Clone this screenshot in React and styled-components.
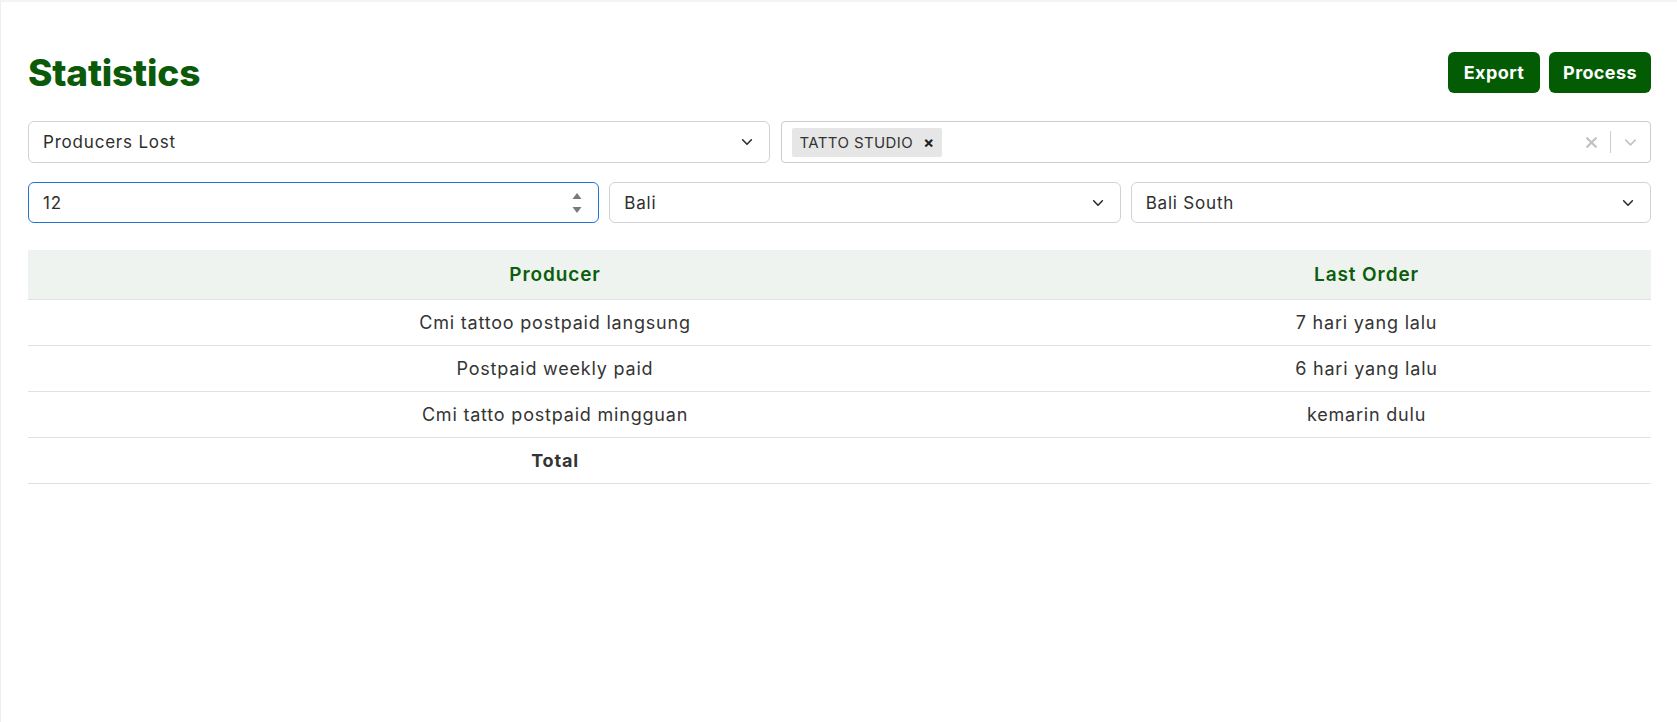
import React from "react";
import styled, { createGlobalStyle } from "styled-components";

const GlobalStyle = createGlobalStyle`
  body {
    margin: 0;
    background: #ffffff;
    font-family: "Inter", "Noto Sans", sans-serif;
    color: #343434;
  }
`;

const rows = [
  { producer: "Cmi tattoo postpaid langsung", last: "7 hari yang lalu" },
  { producer: "Postpaid weekly paid", last: "6 hari yang lalu" },
  { producer: "Cmi tatto postpaid mingguan", last: "kemarin dulu" },
];

const Chevron = ({ color = "#2b2b2b", size = 14 }) => (
  <svg width={size} height={size} viewBox="0 0 16 16" fill="none">
    <path
      d="M3 5.5l5 5 5-5"
      stroke={color}
      strokeWidth="1.8"
      strokeLinecap="round"
      strokeLinejoin="round"
    />
  </svg>
);

const App = () => {
  return (
    <Page>
      <GlobalStyle />
      <Container>
        <HeaderRow>
          <Title>Statistics</Title>
          <Actions>
            <ActionButton $w={92}>Export</ActionButton>
            <ActionButton $w={102}>Process</ActionButton>
          </Actions>
        </HeaderRow>

        <FilterRow $cols="742fr 869fr" $gap={11} $mt={28} $h={42}>
          <SelectBox>
            <SelectText>Producers Lost</SelectText>
            <Chevron />
          </SelectBox>
          <MultiBox>
            <Tags>
              <Tag>
                TATTO STUDIO
                <TagRemove>×</TagRemove>
              </Tag>
            </Tags>
            <Indicators>
              <ClearIcon>
                <svg width="15" height="15" viewBox="0 0 14 14">
                  <path
                    d="M3 3l8 8M11 3l-8 8"
                    stroke="#c2c2c2"
                    strokeWidth="2.2"
                    strokeLinecap="round"
                  />
                </svg>
              </ClearIcon>
              <Separator />
              <DropIcon>
                <Chevron color="#c4c4c4" size={15} />
              </DropIcon>
            </Indicators>
          </MultiBox>
        </FilterRow>

        <FilterRow $cols="571fr 511fr 520fr" $gap={10} $mt={19} $h={41}>
          <NumberBox>
            <NumberInput value="12" readOnly />
            <Spinner>
              <svg width="10" height="22" viewBox="0 0 10 22">
                <path d="M5 1l4.5 6h-9z" fill="#7a7a7a" />
                <path d="M5 21l4.5-6h-9z" fill="#7a7a7a" />
              </svg>
            </Spinner>
          </NumberBox>
          <SelectBox>
            <SelectText>Bali</SelectText>
            <Chevron />
          </SelectBox>
          <SelectBox>
            <SelectText>Bali South</SelectText>
            <Chevron />
          </SelectBox>
        </FilterRow>

        <Table>
          <colgroup>
            <col style={{ width: "1054px" }} />
            <col />
          </colgroup>
          <thead>
            <tr>
              <Th>Producer</Th>
              <Th>Last Order</Th>
            </tr>
          </thead>
          <tbody>
            {rows.map((r) => (
              <tr key={r.producer}>
                <Td>{r.producer}</Td>
                <Td>{r.last}</Td>
              </tr>
            ))}
            <tr>
              <Td $bold>Total</Td>
              <Td></Td>
            </tr>
          </tbody>
        </Table>
      </Container>
    </Page>
  );
};

export default App;

const Page = styled.div`
  min-height: 100vh;
  box-sizing: border-box;
  border-top: 2px solid #f3f4f5;
  border-left: 1px solid #eceeef;
`;

const Container = styled.div`
  padding: 50px 26px 0 27px;
`;

const HeaderRow = styled.div`
  display: flex;
  align-items: center;
  justify-content: space-between;
  height: 41px;
`;

const Title = styled.h1`
  margin: 0;
  font-size: 37px;
  font-weight: 800;
  color: #0a5a0a;
  letter-spacing: -0.2px;
`;

const Actions = styled.div`
  display: flex;
  gap: 9px;
`;

const ActionButton = styled.button`
  width: ${(p) => p.$w}px;
  height: 41px;
  padding: 0;
  border: none;
  border-radius: 6px;
  background: #035b03;
  color: #ffffff;
  font-family: "Inter", "Noto Sans", sans-serif;
  font-size: 18px;
  font-weight: 700;
  letter-spacing: 0.4px;
  cursor: pointer;
`;

const FilterRow = styled.div`
  display: grid;
  grid-template-columns: ${(p) => p.$cols};
  gap: ${(p) => p.$gap}px;
  margin-top: ${(p) => p.$mt}px;
  height: ${(p) => p.$h}px;
`;

const SelectBox = styled.div`
  display: flex;
  align-items: center;
  justify-content: space-between;
  box-sizing: border-box;
  height: 100%;
  padding: 0 15px 0 14px;
  border: 1px solid #cfd3d7;
  border-radius: 6px;
  background: #ffffff;
`;

const SelectText = styled.span`
  font-size: 17px;
  letter-spacing: 0.8px;
  color: #2e2e2e;
`;

const MultiBox = styled.div`
  display: flex;
  align-items: center;
  justify-content: space-between;
  box-sizing: border-box;
  height: 100%;
  padding: 0 0 0 10px;
  border: 1px solid #cccccc;
  border-radius: 4px;
`;

const Tags = styled.div`
  display: flex;
  gap: 4px;
`;

const Tag = styled.div`
  display: flex;
  align-items: center;
  height: 29px;
  padding: 0 8px 0 7px;
  background: #e6e6e6;
  border-radius: 2px;
  font-size: 15px;
  color: #333333;
  letter-spacing: 0.4px;
`;

const TagRemove = styled.span`
  margin-left: 10px;
  font-size: 16px;
  font-weight: 700;
  color: #222222;
`;

const Indicators = styled.div`
  display: flex;
  align-items: center;
  height: 100%;
`;

const ClearIcon = styled.div`
  display: flex;
  padding: 0 11px;
`;

const Separator = styled.span`
  width: 1px;
  height: 22px;
  background: #cccccc;
`;

const DropIcon = styled.div`
  display: flex;
  padding: 0 12px 0 12px;
`;

const NumberBox = styled.div`
  display: flex;
  align-items: center;
  box-sizing: border-box;
  height: 100%;
  padding: 0 16px 0 14px;
  border: 1px solid #1f74d6;
  border-radius: 6px;
`;

const NumberInput = styled.input`
  flex: 1;
  border: none;
  outline: none;
  padding: 0;
  font-family: "Inter", "Noto Sans", sans-serif;
  font-size: 17px;
  letter-spacing: 0.8px;
  color: #2e2e2e;
  background: transparent;
`;

const Spinner = styled.div`
  display: flex;
  align-items: center;
`;

const Table = styled.table`
  width: 100%;
  margin-top: 27px;
  border-collapse: collapse;
  table-layout: fixed;
`;

const Th = styled.th`
  height: 49px;
  padding: 0;
  background: #eef3ef;
  border-bottom: 1px solid #dee2e6;
  font-size: 19px;
  font-weight: 600;
  letter-spacing: 0.9px;
  color: #0b5e0b;
  text-align: center;
`;

const Td = styled.td`
  height: 45px;
  padding: 0;
  border-bottom: 1px solid #dee2e6;
  font-size: 18px;
  letter-spacing: 0.8px;
  font-weight: ${(p) => (p.$bold ? 700 : 400)};
  color: #343434;
  text-align: center;
`;
